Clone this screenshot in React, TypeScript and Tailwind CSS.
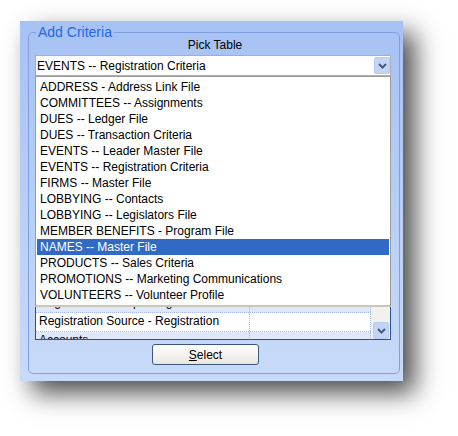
import React from "react";

const tables = [
  "ADDRESS - Address Link File",
  "COMMITTEES -- Assignments",
  "DUES -- Ledger File",
  "DUES -- Transaction Criteria",
  "EVENTS -- Leader Master File",
  "EVENTS -- Registration Criteria",
  "FIRMS -- Master File",
  "LOBBYING -- Contacts",
  "LOBBYING -- Legislators File",
  "MEMBER BENEFITS - Program File",
  "NAMES -- Master File",
  "PRODUCTS -- Sales Criteria",
  "PROMOTIONS -- Marketing Communications",
  "VOLUNTEERS -- Volunteer Profile",
];

// rows of the criteria grid; the upper ones sit under the open list
const criteriaRows = [
  "", "", "", "", "", "", "", "", "", "",
  "Registration Group - Registration",
  "Registration Source - Registration",
  "Accounts",
];

const Chevron = () => (
  <svg width="9" height="6" viewBox="0 0 9 6">
    <path d="M1 1l3.5 3.5L8 1" stroke="#485a80" strokeWidth="2" fill="none" />
  </svg>
);

const DropButton = ({ className = "" }: { className?: string }) => (
  <div className={`flex h-[17px] w-[16px] items-center justify-center rounded-[2px] border border-[#b8cbf1] bg-[#c3d5f7] ${className}`}>
    <Chevron />
  </div>
);

export default function App() {
  const selected = 10;
  return (
    <div className="min-h-[436px] bg-white pl-[20px] pt-[21px] font-['Liberation_Sans',Arial,sans-serif] text-[12px] text-black">
      <div className="h-[360px] w-[383px] bg-linear-to-b from-[#a6c2f3] to-[#c8daf8] pl-[8px] pr-[3px] pt-[4px] shadow-[12px_12px_24px_rgba(0,0,0,0.7)]">
        <fieldset className="h-[349px] rounded-[5px] border border-[#7f9fdf]">
          <legend className="ml-[7px] px-[2px] text-[14px] leading-[14px] text-[#2466e6]">Add Criteria</legend>
          <div className="pl-[6px]">
            <div className="w-[356px] pl-[4px] text-center leading-[12px]">Pick Table</div>

            {/* Pick table dropdown, open */}
            <div className="relative mt-[4px] w-[356px]">
              <div className="flex h-[21px] items-center border border-[#a7aeb8] bg-white pl-[1px]">
                <span className="leading-[16px]">EVENTS -- Registration Criteria</span>
                <DropButton className="ml-auto" />
              </div>
              <ul className="absolute left-0 top-[21px] z-10 w-[356px] border border-[#9c9c9c] border-b-2 border-b-[#c9c6be] bg-white pb-[2px] pt-[2px]">
                {tables.map((t, i) => (
                  <li
                    key={t}
                    className={`mx-px h-[16px] pl-[3px] leading-[16px] ${i === selected ? "bg-[#316ac5] text-white" : ""}`}
                  >
                    {t}
                  </li>
                ))}
              </ul>
            </div>

            {/* Criteria grid */}
            <div className="flex h-[264px] w-[356px] border border-[#2a4f9e] bg-white">
              <div className="w-[335px] overflow-hidden">
                <div className="flex h-[27px] border-b border-dotted border-[#a9bde6]">
                  <div className="w-[214px] border-r border-dotted border-[#a9bde6]"></div>
                  <div className="w-[121px]"></div>
                </div>
                {criteriaRows.map((r, i) => (
                  <div
                    key={i}
                    className={`flex h-[19px] border-b border-dotted border-[#a9bde6] ${i % 2 === 0 ? "bg-[#dfe8f8]" : "bg-white"}`}
                  >
                    <div className="w-[214px] whitespace-nowrap border-r border-dotted border-[#a9bde6] pl-[3px] leading-[16px]">{r}</div>
                    <div className="w-[121px] border-r border-dotted border-[#a9bde6]"></div>
                  </div>
                ))}
              </div>
              <div className="flex w-[19px] flex-col bg-[#f1f1ed]">
                <DropButton className="ml-[2px] mt-auto" />
              </div>
            </div>

            <button className="ml-[117px] mt-[4px] h-[21px] w-[107px] rounded-[3px] border border-[#3d5680] bg-linear-to-b from-white to-[#e9e7df] leading-[18px]">
              <span className="underline">S</span>elect
            </button>
          </div>
        </fieldset>
      </div>
    </div>
  );
}
